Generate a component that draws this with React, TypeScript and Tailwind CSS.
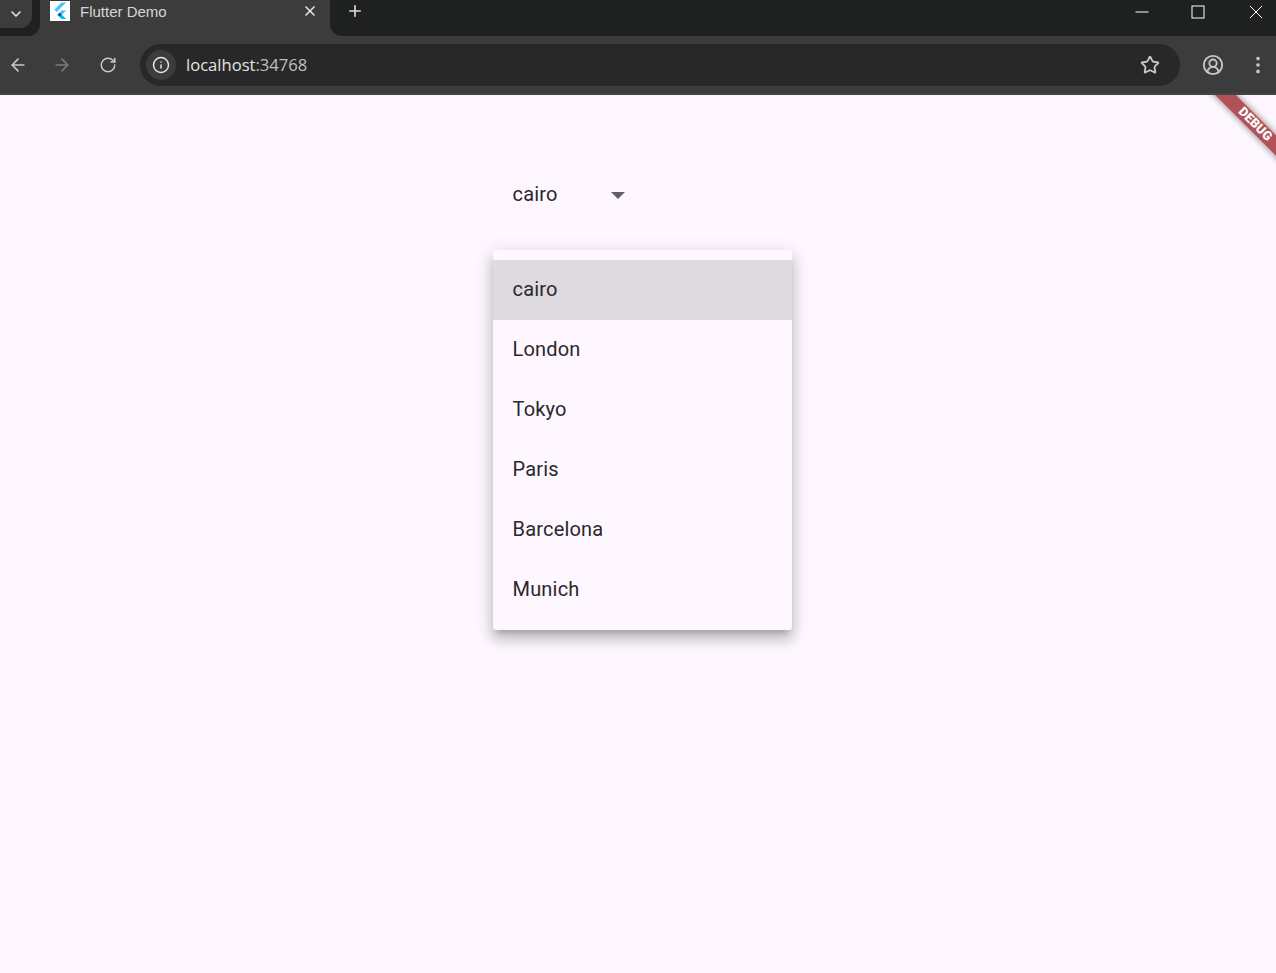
import { ArrowLeft, ArrowRight, ChevronDown, CircleUserRound, EllipsisVertical, Info, Plus, RotateCw, Star, X } from "lucide-react";

const cities = ["cairo", "London", "Tokyo", "Paris", "Barcelona", "Munich"];

function FlutterLogo() {
  return (
    <div className="w-5 h-5 bg-white flex items-center justify-center">
      <svg viewBox="0 0 20 20" width="20" height="20">
        <path d="M11.5 1.5h4.6L6.6 11 4.3 8.7z" fill="#47c5fb" />
        <path d="M11.5 9.6h4.6L12 13.7l-2.3-2.3z" fill="#47c5fb" />
        <path d="M9.7 11.4 12 13.7l-2.3 2.2-2.3-2.2z" fill="#00569e" />
        <path d="M12 13.7l4.1 4.3h-4.6l-2-2z" fill="#00b5f8" />
      </svg>
    </div>
  );
}

function BrowserChrome() {
  return (
    <div className="flex flex-col font-['Open_Sans',sans-serif]">
      {/* Tab strip */}
      <div className="flex h-9 bg-[#3c3c3c]">
        <div className="w-10 bg-[#1f2120] rounded-br-xl">
          <div className="w-8 h-7 bg-[#3c3c3c] rounded-br-xl flex items-center justify-center text-[#e3e3e3]">
            <ChevronDown size={16} strokeWidth={2.5} />
          </div>
        </div>
        <div className="w-[290px] flex items-start pl-2.5 pr-3 pt-[1px]">
          <FlutterLogo />
          <span className="ml-2.5 mt-0.5 text-[15px] leading-[18px] text-[#d6d6d6] font-['Liberation_Sans',sans-serif] flex-1">Flutter Demo</span>
          <X size={16} strokeWidth={2.5} className="text-[#e3e3e3] mt-[2px]" />
        </div>
        <div className="flex-1 bg-[#1f2120] rounded-bl-xl flex items-start">
          <Plus size={18} strokeWidth={2.2} className="ml-4 mt-[2px] text-[#dcdcdc]" />
          <div className="ml-auto flex items-start text-white">
            <div className="w-14 h-6 flex items-center justify-center">
              <svg width="14" height="14" viewBox="0 0 14 14"><path d="M0.5 7h13" stroke="currentColor" strokeWidth="1" /></svg>
            </div>
            <div className="w-14 h-6 flex items-center justify-center">
              <svg width="14" height="14" viewBox="0 0 14 14" fill="none"><rect x="1" y="1" width="12" height="12" stroke="currentColor" strokeWidth="1" /></svg>
            </div>
            <div className="w-[50.5px] h-6 pl-2.5 flex items-center justify-center">
              <svg width="14" height="14" viewBox="0 0 14 14" fill="none"><path d="M1 1l12 12M13 1L1 13" stroke="currentColor" strokeWidth="1" /></svg>
            </div>
          </div>
        </div>
      </div>
      {/* Toolbar */}
      <div className="h-[59px] bg-[#3c3c3c] border-b-2 border-[#444444] flex items-center pt-[1px]">
        <ArrowLeft size={20} className="ml-2 text-[#c7c7c7]" />
        <ArrowRight size={20} className="ml-6 text-[#7a7a7a]" />
        <RotateCw size={18} className="ml-[27px] text-[#c7c7c7]" />
        <div className="ml-[23px] w-[1040px] h-[42px] bg-[#282828] rounded-full flex items-center pl-1.5 pr-5">
          <div className="w-[30px] h-[30px] rounded-full bg-[#3c3c3c] flex items-center justify-center text-[#e3e3e3]">
            <Info size={18} />
          </div>
          <span className="ml-2.5 mt-[1px] text-[16.6px] text-[#e3e3e3] flex-1">
            localhost<span className="text-[#c0c0c0]">:34768</span>
          </span>
          <Star size={20} strokeWidth={2.2} className="text-[#c7c7c7]" />
        </div>
        <CircleUserRound size={22} className="ml-[22px] text-[#c7c7c7]" />
        <EllipsisVertical size={22} className="ml-[23px] text-[#c7c7c7]" />
      </div>
    </div>
  );
}

function DebugBanner() {
  return (
    <div className="absolute top-[22px] -right-[39px] w-[120px] h-[15px] rotate-45 bg-[#a2353b]/[0.85] shadow-[0_0_7px_rgba(0,0,0,0.5)] flex items-center justify-center text-white text-[12.75px] font-black leading-none">
      DEBUG
    </div>
  );
}

export default function App() {
  return (
    <div className="h-screen flex flex-col overflow-hidden">
      <BrowserChrome />
      <div className="relative flex-1 overflow-hidden bg-[#fef7ff] pl-[492.5px] font-[Roboto,sans-serif] text-[20px] tracking-[0.19px] text-[#2a282d]">
        <DebugBanner />
        {/* Dropdown button */}
        <div className="mt-[69px] h-[60px] w-[140px] pl-5 flex items-center relative">
          <span>cairo</span>
          <svg className="absolute left-[118px] top-[28px]" width="14" height="7" viewBox="0 0 14 7">
            <path d="M0 0h14L7 7z" fill="#625f66" />
          </svg>
        </div>
        {/* Open menu */}
        <div className="mt-[26px] w-[299.5px] py-2.5 rounded-[3px] bg-[#fef7ff] shadow-[0_6px_6px_-4px_rgba(0,0,0,0.2),0_10px_12px_1px_rgba(0,0,0,0.14),0_4px_18px_3px_rgba(0,0,0,0.12)]">
          {cities.map((city, i) => (
            <div key={city} className={i === 0 ? "h-[60px] px-5 pb-0.5 flex items-center bg-[#dfdae0]" : "h-[60px] px-5 pb-0.5 flex items-center"}>
              {city}
            </div>
          ))}
        </div>
      </div>
    </div>
  );
}
